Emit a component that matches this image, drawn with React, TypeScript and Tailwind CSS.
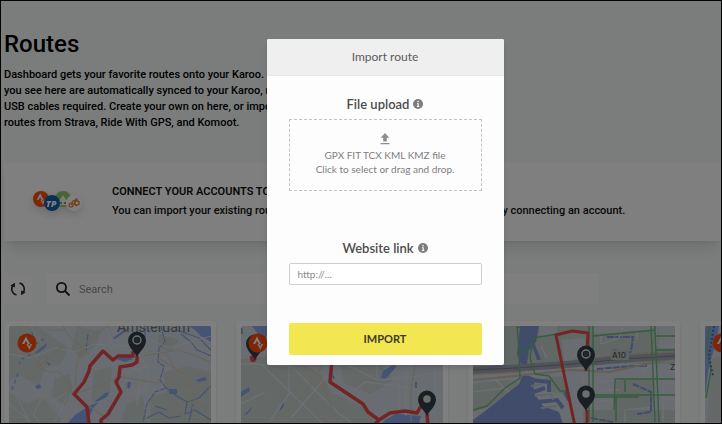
import React from 'react';
import clsx from 'clsx';

interface PinProps {
  x: number;
  y: number;
  ring?: boolean;
}

/** Map marker, x / y is the tip of the pin */
const Pin: React.FC<PinProps> = ({ x, y, ring }) => (
  <g transform={`translate(${x} ${y})`}>
    <path d="M0 0C-2.500-5.500-9-10-9-16.500A9 9 0 0 1 9-16.500C9-10 2.500-5.500 0 0Z" fill="#353f48" />
    {ring ? (
      <>
        <circle cy="-17" r="4" fill="none" stroke="#e2e6ea" strokeWidth="1.400" />
        <circle cy="-17" r="2" fill="#4b555e" />
      </>
    ) : (
      <circle cy="-17" r="3.800" fill="#d4d8dc" />
    )}
  </g>
);

const StravaMark: React.FC<{ x: number; y: number; r?: number }> = ({ x, y, r = 9.5 }) => (
  <g transform={`translate(${x} ${y}) scale(${r / 9.5})`}>
    <circle r="9.500" fill="#fc4c10" />
    <path d="M-5 1L-1-6.500L3 1H.8L-1-2.300L-2.800 1Z" fill="#fff" />
    <path d="M-.8 1H1.200L2.300 3.300L3.400 1H5.200L2.300 6.800Z" fill="#ffe4d8" />
  </g>
);

interface MapProps {
  label: string;
  children: React.ReactNode;
}

const MapCard: React.FC<MapProps> = ({ label, children }) => (
  <li className="w-[212px] shrink-0 rounded-sm bg-white p-[5px] shadow-sm">
    <svg viewBox="0 0 202 140" className="block w-full rounded-xs" role="img" aria-label={label}>
      <rect width="202" height="140" fill="#d2d8e2" />
      {children}
    </svg>
  </li>
);

const AmsterdamMap = () => (
  <MapCard label="Route around Amsterdam">
    <g fill="#c8d3cf">
      <path d="M0 0H28L45 12L60 22L52 38L36 42L30 60L12 50L0 55Z" />
      <path d="M68 0L92 6L88 18L72 32L62 24Z" />
      <path d="M0 66L18 78L34 70L52 88L44 140H0Z" />
      <path d="M46 52L60 48L64 62L56 80L42 70Z" />
      <path d="M85 45L104 40L100 70L82 76Z" />
      <path d="M154 46L178 40L202 46V140H140L142 70L158 66Z" />
      <path d="M150 8L170 14L162 26L148 20ZM118 78L134 70L138 96H112Z" />
    </g>
    <g fill="#8aa8e8">
      <path d="M180 0H202V16L192 10L186 4Z" />
      <path d="M104 12L116 3L121 2L113 8L106 13ZM107 33L118 29L124 33L116 36Z" />
      <path d="M25 28L31 22L38 17L37 21L31 26ZM37 35L42 38L40 40ZM26 60L31 58L32 62L28 63ZM117 56H122L121 62L117 63Z" />
      <path d="M85 76L96 67L100 66L98 71L90 75ZM58 98L66 89L72 85L82 79L90 76L84 82L78 98Z" />
      <path d="M160 63H168V68H160ZM186 54L196 51L198 54L190 56Z" />
    </g>
    <g fill="none" stroke="#8aa5dc" strokeWidth="1.200" strokeLinejoin="round">
      <path d="M152 0L156 16L150 22L149 36L155 40L151 54L157 62L146 66L138 78L134 96" strokeDasharray="5 1" />
      <path d="M157 62L168 70L178 76L176 88M178 76L190 72L202 60M172 8L182 16L188 24L202 30M168 4L190 12L202 24" />
      <path d="M23 6L25 18M22 28L14 32L10 38M9 47L6 56L2 66M35 13L27 18" strokeDasharray="4 3" />
      <path d="M136 0V15M176 88L186 84L202 94M79 8L77 24" />
      <path d="M138 92L150 86L160 92L172 90M146 80L158 84M184 78L180 96" />
    </g>
    <g fill="none" stroke="#dde1e8" strokeWidth="1">
      <path d="M0 28L22 32L46 22L66 26L86 18L118 20L138 12L160 22L202 10" />
      <path d="M130 30L140 44L136 66L118 66L118 46L140 40M22 0L32 16M16 54L40 78L58 98M0 78L22 96M8 70L20 96M34 70L24 88L32 98M40 78L58 66" />
      <path d="M46 96L58 70M112 40L132 44L128 80M96 0L102 14L92 25" />
    </g>
    <g fill="none" stroke="#d5c8b4" strokeWidth="1.200">
      <path d="M54 0L58 8L80 28M106 50L142 56L202 62M38 4H54M22 28L32 42L40 46L50 46L60 56L64 70" />
      <path d="M22 28L16 26L0 12M54 20L40 32L22 46L16 54M64 68L74 76L100 94M84 8L72 24L68 38L66 60M66 68L110 52M150 32L180 52L186 76L202 84M134 30L170 24L202 36" />
      <path d="M156 26L176 58L186 90M84 8L100 0" />
    </g>
    <text x="108" y="6" fontSize="14" fill="#70747c" className="font-['Roboto']">Amsterdam</text>
    <path
      d="M124 25V30H109L104 34L94 25L81 40L80 45L75 56L65 68L78 81L80 98M128 30V36L123 39L111 41L110 51L107 56L112 66L99 88L92 94V98"
      fill="none" stroke="#e64a4d" strokeWidth="3.500" strokeLinejoin="round"
    />
    <Pin x={128} y={31} ring />
    <StravaMark x={18} y={17} />
  </MapCard>
);

const PolderMap = () => (
  <MapCard label="Route through the polder">
    <g fill="#c8d3cf">
      <path d="M0 34L30 30L60 36L82 50L90 66L120 80L134 96V140H0Z" />
      <path d="M98 38H140L152 54L130 68L104 58Z" />
      <path d="M18 4L40 0L52 14L30 22Z" />
    </g>
    <g fill="#8aa8e8">
      <path d="M11 0H26L27 10L20 12ZM0 66L8 61L9 65L0 71ZM4 88L11 81L10 84L5 89ZM40 80L43 76V80L38 86Z" />
      <path d="M142 45L152 39L156 40L149 48L144 53L140 52ZM174 56H176V62H174ZM91 48L94 51L92 54ZM144 94L155 88L180 90L178 97H142Z" />
    </g>
    <g fill="none" stroke="#dde1e8" strokeWidth="1.200">
      <path d="M0 38H12L48 40L48 68L28 96M20 38L82 98M48 38L96 86L110 96M86 50L50 92M104 38L136 54L162 52L202 46" />
      <path d="M112 66L124 56L158 60V84M158 60L202 70M165 38V90M194 38V96M136 54V38M0 78L24 66" />
    </g>
    <g fill="none" stroke="#d5c8b4" strokeWidth="1.200">
      <path d="M0 34L30 32L55 38L78 48L96 96M82 38L66 64L36 96M174 38L170 66V96" />
    </g>
    <text x="-4" y="8" fontSize="11" fill="#70747c" className="font-['Roboto']">n</text>
    <path
      d="M12 35L10 30M91 34L89 56L122 78L127 86L138 94L149 87L164 85L176 87L180 80M186 88L187 100M138 94L132 100"
      fill="none" stroke="#e64a4d" strokeWidth="3.500" strokeLinejoin="round"
    />
    <path d="M9 32H16L14 36H10Z" fill="#e64a4d" />
    <Pin x={14} y={34} />
    <Pin x={186} y={90} />
    <StravaMark x={17} y={17} />
  </MapCard>
);

const CanalMap = () => (
  <MapCard label="Route along the A10">
    <g fill="#c3cfc9">
      <path d="M0 0H202V38H0Z" />
      <path d="M0 58L32 54L46 56L30 74L14 82L0 86Z" />
      <path d="M142 54H182V80L142 84ZM110 84H202V140H110ZM72 52L90 50L94 68L78 66Z" />
    </g>
    <g fill="#d3d8e1">
      <path d="M66 0H84V8L66 12ZM88 14L112 12V30L92 36ZM120 0H180V4L120 8ZM186 0H202V22H186Z" />
    </g>
    <g fill="#8099d2">
      <path d="M47 0H66L63 16L56 24L54 38H48L44 28Z" />
      <path d="M50 48L62 52L60 66L70 80L86 86L90 98V140H0V94L16 82L46 58Z" />
      <path d="M61 16L68 34L64 34L59 20Z" />
    </g>
    <g fill="none" stroke="#8099d2" strokeWidth="4">
      <path d="M58 54L76 56V66M60 66L72 62M64 76L84 74L90 82M92 66L96 74" />
    </g>
    <g fill="none" stroke="#c3cbd6" strokeWidth="2">
      <path d="M58 60L70 58M62 70L78 68L80 74M68 82L84 80" />
    </g>
    <g fill="none" stroke="#8099d2" strokeWidth="2">
      <path d="M134 11H160L158 26M140 24L158 27M124 43L160 40H174M160 58L178 66V86L164 88M118 92L140 96" strokeDasharray="7 1" />
    </g>
    <g fill="none" stroke="#dde1e8" strokeWidth="1.200">
      <path d="M0 66L32 62M150 0L146 12L128 18V10M202 30L180 34L170 46M184 0V20H202M100 14L108 24L98 32M68 20L74 32M124 56L148 54M122 76L138 74L142 84M18 50L36 66" />
      <path d="M190 50V96M164 0V14M98 44L110 46V62M130 64H146M152 84V98" />
    </g>
    <path d="M0 48L42 46L88 38L146 29L202 26M0 54L42 50L98 44L136 46L202 32" fill="none" stroke="#c9bea9" strokeWidth="2" />
    <path d="M0 44L42 42L100 38L150 33L202 30" fill="none" stroke="#a0a7b1" strokeWidth="7" />
    <path d="M0 44L42 42L100 38L150 33L202 30" fill="none" stroke="#7d8490" strokeWidth="1" />
    <g fill="none" stroke="#6cb87c" strokeWidth="1.400" strokeLinejoin="round">
      <path d="M44 0L46 26L47 52L32 62L14 80L0 84M46 26L58 22L60 12L84 8M60 12L57 32L62 48L76 50L87 65H94" />
      <path d="M120 0V96M116 0V96M120 10L182 4V0M182 4L186 96M178 0L182 96M182 10H202M142 53H202M142 53L141 84M152 54V66M118 69H202M118 71H166M143 70V96" />
      <path d="M44 2L52 0M182 24H202" />
    </g>
    <rect x="138" y="24" width="18" height="10" rx="1" fill="#bcc5c6" />
    <text x="139" y="32" fontSize="8" fill="#51565d" className="font-['Inter'] font-medium">A10</text>
    <text x="197" y="44" fontSize="8" fill="#51565d" className="font-['Inter'] font-medium">Z</text>
    <path
      d="M102 100L91 48L83 9L99 5L115 7L113 45M114 84V100"
      fill="none" stroke="#e64a4d" strokeWidth="3" strokeLinejoin="round"
    />
    <Pin x={113} y={45} ring />
    <Pin x={113} y={85} />
  </MapCard>
);

const CoastMap = () => (
  <MapCard label="Route along the coast">
    <path d="M0 0H14L10 20L4 40L0 70Z" fill="#8aa8e8" />
    <path d="M6 34L20 28V96H2Z" fill="#c8d3cf" />
    <path d="M4 0L2 24L6 44L1 72" fill="none" stroke="#6cb87c" strokeWidth="1.500" />
    <path d="M9 0L4 30L8 50" fill="none" stroke="#4c6fb0" strokeWidth="2" strokeDasharray="2 2" />
    <StravaMark x={17} y={17} />
  </MapCard>
);

const AccountLogos = () => (
  <svg viewBox="0 0 50 24" className="h-6 w-[50px] overflow-visible drop-shadow-lg" aria-hidden="true">
    <StravaMark x={8} y={9} r={8} />
    <circle cx="30" cy="9" r="8" fill="#8ec96a" />
    <path d="M24 14L30 5L36 14L34 15H26Z" fill="#f0f8e8" />
    <circle cx="28" cy="13" r="1" fill="#558a35" />
    <circle cx="32" cy="13" r="1" fill="#558a35" />
    <circle cx="19" cy="13" r="8" fill="#1460ac" />
    <text x="13" y="17" fontSize="9" fill="#fff" className="font-['Open_Sans'] font-extrabold italic">TP</text>
    <circle cx="41" cy="13" r="8" fill="#fff" />
    <g fill="none" stroke="#e9762e" strokeWidth="1.200">
      <circle cx="38" cy="15" r="2" />
      <circle cx="44" cy="13" r="2.200" />
      <path d="M38 15L40 11L43 10L41 14L44 16M42 9H45" />
    </g>
  </svg>
);

const InfoIcon: React.FC<{ title: string }> = ({ title }) => (
  <svg viewBox="0 0 10 10" className="size-[10px]" role="img" aria-label={title}>
    <circle cx="5" cy="5" r="5" fill="#7d7d7d" />
    <path d="M4.400 2H5.700V3.200H4.400ZM4 4.200H5.700V7H6.300V7.900H3.900V7H4.500V5H4Z" fill="#fff" />
  </svg>
);

const fieldLabel = 'flex items-center justify-center gap-1 text-[13px] leading-4 font-semibold text-[#4c4c4c]';

const ImportRouteDialog = () => (
  <div
    role="dialog"
    aria-labelledby="import-title"
    className="w-[237px] overflow-hidden rounded-xs bg-[#fdfdfe] font-['Lato',sans-serif] shadow-md"
  >
    <h2 id="import-title" className="border-b border-[#e8e8e8] bg-[#efefef] py-[10px] text-center text-xs leading-4 text-[#5c5c5c]">
      Import route
    </h2>
    <form className="px-[22px] pt-5 pb-[10px]" onSubmit={(e) => e.preventDefault()}>
      <label htmlFor="route-file" className={fieldLabel}>
        File upload <InfoIcon title="Supported files" />
      </label>
      <label
        htmlFor="route-file"
        className="mt-[7px] flex h-[72px] cursor-pointer flex-col items-center border border-dashed border-[#c4c4c4] pt-[13px] text-[10px] leading-[14px] text-[#7d7d7d]"
      >
        <svg viewBox="0 0 10 12" className="mb-[3px] h-3 w-[10px]" aria-hidden="true">
          <path d="M5 0L9.300 4.800H6.800V8.500H3.200V4.800H.7ZM.5 10H9.500V11.300H.5Z" fill="#8d8d8d" />
        </svg>
        <span>GPX FIT TCX KML KMZ file</span>
        <span>Click to select or drag and drop.</span>
        <input id="route-file" type="file" className="sr-only" />
      </label>
      <label htmlFor="route-link" className={clsx(fieldLabel, 'mt-[49px]')}>
        Website link <InfoIcon title="Supported links" />
      </label>
      <input
        id="route-link"
        type="url"
        placeholder="http://..."
        className="mt-[7px] block h-[22px] w-full rounded-xs border border-[#cfcfcf] bg-white px-2 text-[10px] placeholder:text-[#8a8a8a]"
      />
      <button type="submit" className="mt-[38px] block h-8 w-full rounded-xs bg-[#f2e750] text-[11px] font-bold text-[#3b3a2c]">
        IMPORT
      </button>
    </form>
  </div>
);

const App = () => {
  return (
    <div className="relative h-screen overflow-hidden border border-black bg-[#f7fafa] font-['Roboto',sans-serif] text-black">
      <main className="pl-[3px]">
        <h1 className="pt-[27px] text-2xl leading-8 font-medium">Routes</h1>
        <p className="mt-[7px] text-[11px] leading-4 font-medium whitespace-nowrap">
          Dashboard gets your favorite routes onto your Karoo. All routes<br />
          you see here are automatically synced to your Karoo, no<br />
          USB cables required. Create your own on here, or import<br />
          routes from Strava, Ride With GPS, and Komoot.
        </p>

        <section className="mt-[31px] flex h-[79px] items-center bg-white pl-[29px] shadow-lg">
          <AccountLogos />
          <div className="mb-[2px] ml-[29px] text-[11px] leading-[19px] whitespace-nowrap text-[#111]">
            <h2 className="font-semibold">CONNECT YOUR ACCOUNTS TO IMPORT ROUTES</h2>
            <p className="font-medium">
              You can import your existing routes from services such as Strava and Komoot by connecting an account.
            </p>
          </div>
        </section>

        <div className="mt-8 flex gap-[15px]">
          <button type="button" aria-label="Refresh routes" className="flex h-[31px] w-7 items-center justify-center bg-[#fdfdfd]">
            <svg viewBox="0 0 16 16" className="size-4" fill="none" stroke="#24282c" strokeWidth="1.500">
              <path d="M6.500 14A6.200 6.200 0 0 1 3 4.200M9.500 2A6.200 6.200 0 0 1 13 11.800" />
              <path d="M.5 4.500L5 1.800L4.800 6.500ZM15.500 11.500L11 14.200L11.200 9.500Z" fill="#24282c" stroke="none" />
            </svg>
          </button>
          <div className="flex h-[31px] max-w-[552px] flex-1 items-center gap-2 bg-white pl-2">
            <svg viewBox="0 0 16 16" className="size-4" fill="none" stroke="#1c1f22" strokeWidth="1.800" aria-hidden="true">
              <circle cx="6.500" cy="6.500" r="4.600" />
              <path d="M10 10L14.500 14.500" />
            </svg>
            <input
              type="search"
              aria-label="Search routes"
              placeholder="Search"
              className="h-full min-w-0 flex-1 bg-transparent pt-[2px] text-[11px] placeholder:text-[#8f8f8f]"
            />
          </div>
        </div>

        <ul className="mt-[17px] flex gap-5">
          <AmsterdamMap />
          <PolderMap />
          <CanalMap />
          <CoastMap />
        </ul>
      </main>

      <div className="absolute inset-0 flex items-start justify-center bg-black/50 pt-[38px] pl-12">
        <ImportRouteDialog />
      </div>
    </div>
  );
};

export default App;
